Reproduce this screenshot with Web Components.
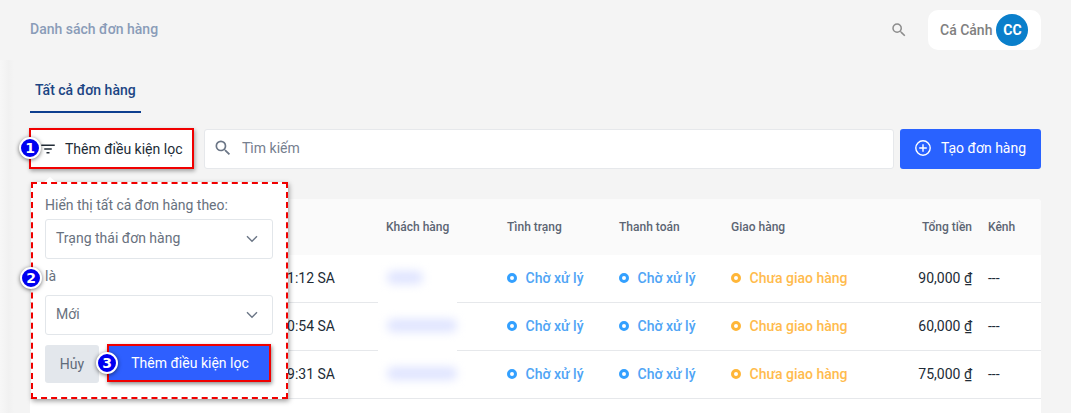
<!DOCTYPE html>
<html lang="vi">
<head>
<meta charset="utf-8">
<title>Danh sách đơn hàng</title>
<style>
  html,body{margin:0;height:413px;overflow:hidden;background:#f4f4f4;font-family:Roboto,"Liberation Sans",sans-serif;}
</style>
</head>
<body>
<order-page></order-page>

<script>
(function orderScreen(document){
  'use strict';

  const ICONS = {
    search:'<path d="M15.5 14h-.79l-.28-.27A6.47 6.47 0 0 0 16 9.5 6.5 6.5 0 1 0 9.5 16c1.61 0 3.09-.59 4.23-1.57l.27.28v.79l5 4.99L20.49 19l-4.99-5zm-6 0C7.01 14 5 11.99 5 9.5S7.01 5 9.5 5 14 7.01 14 9.5 11.99 14 9.5 14z"/>',
    filter:'<path d="M3 6h18v2H3zM7 11h10v2H7zM10 16h4v2h-4z"/>'
  };

  class AppIcon extends HTMLElement{
    constructor(){
      super();
      const shadowRoot = this.attachShadow({mode:'open'});
      const size = this.getAttribute('size') || 24;
      shadowRoot.innerHTML = `
        <style>
          :host{display:inline-flex;flex:none;color:inherit;}
          svg{display:block;fill:currentColor;}
        </style>
        <svg width="${size}" height="${size}" viewBox="0 0 24 24">${ICONS[this.getAttribute('name')]}</svg>
      `;
    }
  }

  class AppHeader extends HTMLElement{
    constructor(){
      super();
      const shadowRoot = this.attachShadow({mode:'open'});
      shadowRoot.innerHTML = `
        <style>
          :host{display:flex;align-items:center;height:60px;padding:0 30px;box-sizing:border-box;}
          h1{margin:0;flex:1;font-size:14px;font-weight:500;color:#8a9cb8;position:relative;top:-1px;}
          app-icon{color:#8c8c8c;margin-right:20px;}
          .shop{display:flex;align-items:center;height:40px;width:113px;box-sizing:border-box;padding:0 12px;gap:4px;background:#fff;border-radius:10px;font-size:14px;font-weight:500;color:#808080;white-space:nowrap;}
          .avatar{flex:none;width:32px;height:32px;border-radius:50%;background:#0a7fcb;color:#fff;display:flex;align-items:center;justify-content:center;font-size:14px;font-weight:700;}
        </style>
        <h1>Danh sách đơn hàng</h1>
        <app-icon name="search" size="18"></app-icon>
        <div class="shop"><span>Cá Cảnh</span><span class="avatar">CC</span></div>
      `;
    }
  }

  class OrderTabs extends HTMLElement{
    constructor(){
      super();
      const shadowRoot = this.attachShadow({mode:'open'});
      shadowRoot.innerHTML = `
        <style>
          :host{display:flex;height:53px;align-items:flex-end;}
          a{display:block;width:111px;box-sizing:border-box;padding:0 0 11px 5px;border-bottom:2px solid #0d3f8f;font-size:14px;font-weight:500;color:#1b4583;line-height:20px;}
        </style>
        <a>Tất cả đơn hàng</a>
      `;
    }
  }

  class OrderToolbar extends HTMLElement{
    constructor(){
      super();
      const shadowRoot = this.attachShadow({mode:'open'});
      shadowRoot.innerHTML = `
        <style>
          :host{display:flex;height:40px;margin-top:16px;font-size:14px;}
          .filter{display:flex;align-items:center;width:165px;margin:-1px 0 0 -1px;box-sizing:border-box;padding-left:8px;gap:8px;background:#fff;border:2px solid #f00000;box-shadow:1px 2px 4px rgba(0,0,0,.35);color:#212b36;}
          .search{display:flex;align-items:center;flex:1;margin:0 6px 0 10px;padding:0 0 2px 8px;gap:9px;background:#fff;border:1px solid #e6e8eb;border-radius:3px;color:#76808f;}
          .search app-icon{color:#6b7686;}
          .create{display:flex;align-items:center;justify-content:center;gap:10px;width:141px;padding-bottom:2px;box-sizing:border-box;background:#2962ff;border-radius:3px;color:#fff;}
          .create svg{display:block;}
        </style>
        <div class="filter"><app-icon name="filter" size="18"></app-icon><span>Thêm điều kiện lọc</span></div>
        <div class="search"><app-icon name="search" size="20"></app-icon><span>Tìm kiếm</span></div>
        <div class="create">
          <svg width="16" height="16" viewBox="0 0 16 16" fill="none" stroke="#fff" stroke-width="1.4"><circle cx="8" cy="8" r="7.2"/><path d="M8 4.2v7.6M4.2 8h7.6"/></svg>
          <span>Tạo đơn hàng</span>
        </div>
      `;
    }
  }

  class OrderTable extends HTMLElement{
    constructor(){
      super();
      const shadowRoot = this.attachShadow({mode:'open'});
      shadowRoot.innerHTML = `
        <style>
          :host{display:block;margin-top:30px;min-height:214px;background:#fff;border-radius:4px 4px 0 0;overflow:hidden;}
          .head{display:grid;grid-template-columns:var(--cols);height:56px;align-items:center;background:#fafafa;font-size:12px;font-weight:500;color:#5c6573;}
          .money{text-align:right;padding-right:16px;}
        </style>
        <div class="head">
          <span></span><span>Khách hàng</span><span>Tình trạng</span><span>Thanh toán</span><span>Giao hàng</span>
          <span class="money">Tổng tiền</span><span>Kênh</span>
        </div>
        <slot></slot>
      `;
    }
  }

  class OrderRow extends HTMLElement{
    constructor(){
      super();
      const shadowRoot = this.attachShadow({mode:'open'});
      const a = n => this.getAttribute(n);
      // hàng cuối: đường kẻ không bị vệt mờ che
      const last = this.hasAttribute('last');
      shadowRoot.innerHTML = `
        <style>
          :host{display:grid;grid-template-columns:var(--cols);height:48px;box-sizing:border-box;padding-bottom:1px;align-items:center;border-bottom:1px solid #e6e8eb;font-size:14px;color:#212b36;}
          .time{text-align:right;padding-right:51px;}
          .customer{position:relative;height:100%;}
          .customer i{position:absolute;left:1px;top:16px;height:13px;width:${a('blur')}px;background:#dfe4ff;border-radius:6px;filter:blur(5px);}
          .customer b{position:absolute;left:-8px;bottom:-2px;width:79px;height:1px;background:#fff;display:${last ? 'none' : 'block'};}
          .money{text-align:right;padding-right:16px;}
        </style>
        <span class="time">${a('time')}</span>
        <span class="customer"><i></i><b></b></span>
        <status-dot color="#33a0ff" text="#4fa4f5">Chờ xử lý</status-dot>
        <status-dot color="#33a0ff" text="#4fa4f5">Chờ xử lý</status-dot>
        <status-dot color="#ffb638" text="#ffbb4d">Chưa giao hàng</status-dot>
        <span class="money">${a('total')} ₫</span>
        <span>---</span>
      `;
    }
  }

  class StatusDot extends HTMLElement{
    constructor(){
      super();
      const shadowRoot = this.attachShadow({mode:'open'});
      const color = this.getAttribute('color');
      shadowRoot.innerHTML = `
        <style>
          :host{display:flex;align-items:center;gap:8.5px;font-weight:500;color:${this.getAttribute('text')};}
          i{width:10px;height:10px;box-sizing:border-box;border:3px solid ${color};border-radius:50%;}
        </style>
        <i></i><slot></slot>
      `;
    }
  }

  class SelectBox extends HTMLElement{
    constructor(){
      super();
      const shadowRoot = this.attachShadow({mode:'open'});
      shadowRoot.innerHTML = `
        <style>
          :host{display:flex;align-items:center;justify-content:space-between;height:40px;box-sizing:border-box;padding:0 14px 3px 10px;border:1px solid #e2e6ea;border-radius:3px;font-size:14px;color:#68717e;}
          svg{display:block;margin-top:3px;}
        </style>
        <slot></slot>
        <svg width="12" height="8" viewBox="0 0 12 8" fill="none" stroke="#6b7686" stroke-width="1.4"><path d="M1 1.2l5 5 5-5"/></svg>
      `;
    }
  }

  class FilterPopover extends HTMLElement{
    constructor(){
      super();
      const shadowRoot = this.attachShadow({mode:'open'});
      shadowRoot.innerHTML = `
        <style>
          :host{position:absolute;left:31px;top:182px;width:257px;height:217px;box-sizing:border-box;padding:11px 13px 0 12px;background:#fff;border:2px dashed #f00000;box-shadow:1px 2px 5px rgba(0,0,0,.4);font-size:14px;color:#68717e;}
          :host::before{content:"";position:absolute;left:11px;top:-7px;border:6px solid transparent;border-top:0;border-bottom:5px solid #fff;}
          label{display:block;line-height:20px;}
          .first{margin-bottom:4px;}
          .second{margin:7px 0 9px;}
          .actions{display:flex;margin-top:9px;gap:8px;}
          .cancel{width:54px;height:38px;margin-top:1px;display:flex;align-items:center;justify-content:center;background:#e3e7ec;border-radius:3px;color:#5f6b7a;}
          .add{width:164px;height:38px;box-sizing:border-box;padding-left:2px;display:flex;align-items:center;justify-content:center;background:#2e5fff;border:2px solid #f00000;box-shadow:1px 2px 4px rgba(0,0,0,.45);color:#fff;}
        </style>
        <label class="first">Hiển thị tất cả đơn hàng theo:</label>
        <select-box>Trạng thái đơn hàng</select-box>
        <label class="second">là</label>
        <select-box>Mới</select-box>
        <div class="actions"><div class="cancel">Hủy</div><div class="add">Thêm điều kiện lọc</div></div>
      `;
    }
  }

  class StepBadge extends HTMLElement{
    constructor(){
      super();
      const shadowRoot = this.attachShadow({mode:'open'});
      shadowRoot.innerHTML = `
        <style>
          :host{position:absolute;left:${this.getAttribute('x')}px;top:${this.getAttribute('y')}px;width:22px;height:22px;box-sizing:border-box;border:2px solid #fff;border-radius:50%;background:#0000f0;box-shadow:0 1px 4px rgba(0,0,0,.55);color:#fff;display:flex;align-items:center;justify-content:center;font:700 14px "DejaVu Sans",sans-serif;}
        </style>
        <slot></slot>
      `;
    }
  }

  class OrderPage extends HTMLElement{
    constructor(){
      super();
      const shadowRoot = this.attachShadow({mode:'open'});
      shadowRoot.innerHTML = `
        <style>
          :host{display:block;position:relative;height:413px;overflow:hidden;--cols:356px 121px 112px 112px 127px 130px 53px;}
          .body{height:353px;padding:0 30px;box-sizing:border-box;background:linear-gradient(90deg,#f7f7f7 0,#f1f1f1 9px,#f4f4f4 14px);}
        </style>
        <app-header></app-header>
        <div class="body">
          <order-tabs></order-tabs>
          <order-toolbar></order-toolbar>
          <order-table>
            <order-row time="1:12 SA" total="90,000" blur="36"></order-row>
            <order-row time="0:54 SA" total="60,000" blur="70"></order-row>
            <order-row time="9:31 SA" total="75,000" blur="70" last></order-row>
          </order-table>
        </div>
        <filter-popover></filter-popover>
        <step-badge x="19" y="137">1</step-badge>
        <step-badge x="20" y="267">2</step-badge>
        <step-badge x="96" y="352">3</step-badge>
      `;
    }
  }

  customElements.define('app-icon', AppIcon);
  customElements.define('app-header', AppHeader);
  customElements.define('order-tabs', OrderTabs);
  customElements.define('order-toolbar', OrderToolbar);
  customElements.define('status-dot', StatusDot);
  customElements.define('order-table', OrderTable);
  customElements.define('order-row', OrderRow);
  customElements.define('select-box', SelectBox);
  customElements.define('filter-popover', FilterPopover);
  customElements.define('step-badge', StepBadge);
  customElements.define('order-page', OrderPage);

})(document);
</script>
</body>
</html>
